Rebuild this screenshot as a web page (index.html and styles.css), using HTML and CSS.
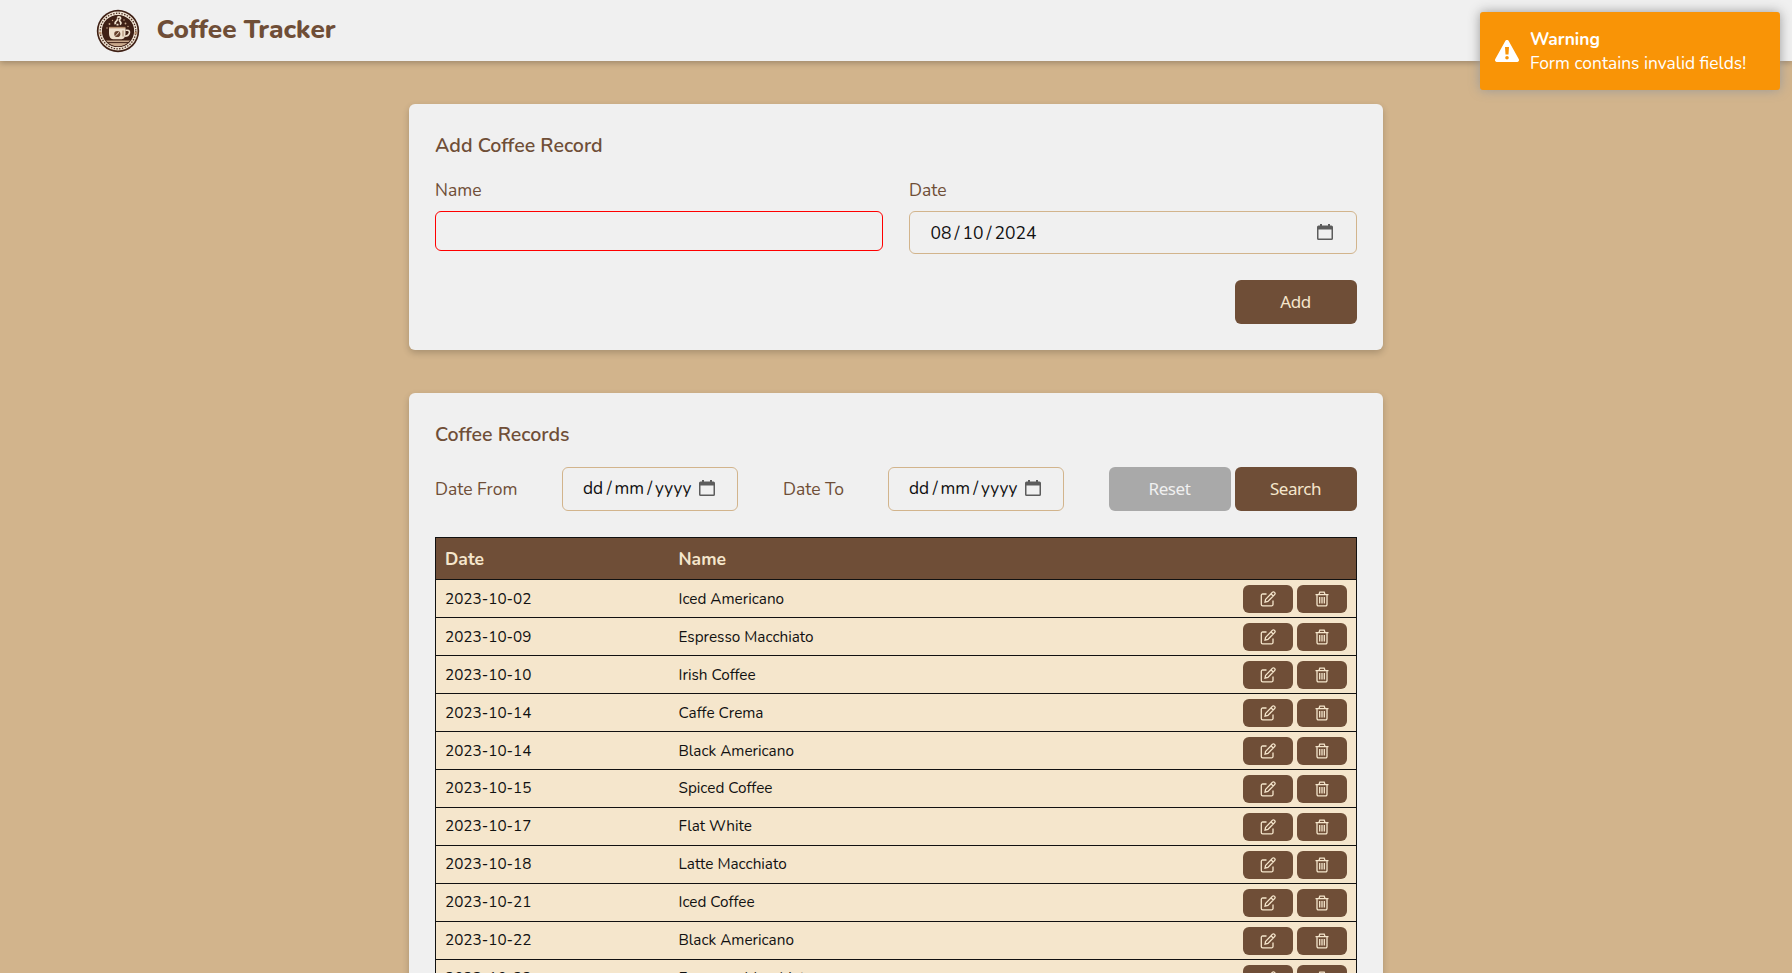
FILE: index.html
```
<!DOCTYPE html>
<html lang="en">
<head>
<meta charset="utf-8">
<title>Coffee Tracker</title>
<link rel="stylesheet" href="styles.css">
</head>
<body>
<svg class="sprite" aria-hidden="true">
  <symbol id="edit" viewBox="0 0 16 16"><path d="M6.500 3H2.700A1.400 1.400 0 0 0 1.300 4.400v9a1.400 1.400 0 0 0 1.400 1.400H11.600a1.400 1.400 0 0 0 1.400-1.400V9.500M5.600 8.400 12.300 1.400a1.550 1.550 0 0 1 2.300 2.200L7.900 10.500l-2.900.7zM11 2.800l2.200 2.200"/></symbol>
  <symbol id="trash" viewBox="0 0 16 16"><path d="M1.500 3.600h13M3 3.800v9.700A1.400 1.400 0 0 0 4.400 14.900h7.200A1.400 1.400 0 0 0 13 13.500V3.800M5 3.400 5.800 1.200h4.400L11 3.400M5.700 6v6.600M8 6v6.600M10.300 6v6.600"/></symbol>
  <symbol id="calendar" viewBox="0 0 16 16"><path fill-rule="evenodd" d="M3 0h2v1.500h6V0h2v1.500h1.400A1.600 1.600 0 0 1 16 3.100v11.300a1.600 1.600 0 0 1-1.600 1.600H1.600A1.600 1.600 0 0 1 0 14.400V3.100A1.600 1.600 0 0 1 1.600 1.500H3zM1.500 5.500v9h13v-9z"/></symbol>
</svg>
<header class="topbar">
  <svg class="logo" viewBox="0 0 44 44">
    <circle cx="22" cy="22" r="21.200" fill="#3f2015"/>
    <circle cx="22" cy="22" r="17.800" fill="none" stroke="#efe3d3" stroke-width="3.400"/>
    <circle cx="22" cy="22" r="17.800" fill="none" stroke="#4a2a1c" stroke-width="1.300" stroke-dasharray="1.400 1.400"/>
    <circle cx="22" cy="22" r="15.400" fill="#3f2015"/>
    <path d="M10 31.500h24a15.400 15.400 0 0 1-24 0z" fill="#c9a98c"/>
    <path d="M11 33.600h22" stroke="#3f2015" stroke-width="1"/>
    <path d="M13 19h16.500v5c0 3.500-1.500 6.200-4 6.200h-8.500c-2.500 0-4-2.700-4-6.200z" fill="#efe0cc"/>
    <path d="M13 18.600h16.500" stroke="#b78e6d" stroke-width="1.500"/>
    <path d="M29.500 21.200h2c3.400 0 2.400 6-2.600 6" fill="none" stroke="#efe0cc" stroke-width="1.600"/>
    <circle cx="21.300" cy="25" r="3.100" fill="#68412d"/>
    <path d="M19.500 26.600c2-.5 1.800-2.800 3.600-3.200" stroke="#efe0cc" fill="none"/>
    <path d="M27 21.500v6" stroke="#a17e65"/>
    <path d="M19.500 15.300c-2-3.200 3.300-3.200 1.800-6M24 15.600c3.200-2.600-2.700-3.400.3-5.600M21.300 8.800c1.500-1.800 4-.6 3 1.400M20.500 15.600h2" fill="none" stroke="#efe0cc" stroke-width="1.700"/>
    <g fill="#c9a98c"><circle cx="13.500" cy="15" r=".9"/><circle cx="16.500" cy="11.500" r=".7"/><circle cx="29.500" cy="14.500" r=".9"/><circle cx="32" cy="17.500" r=".7"/><circle cx="11" cy="19" r=".7"/><circle cx="28" cy="11" r=".7"/></g>
    <g fill="#b78e6d"><circle cx="4.200" cy="24" r="1.500"/><circle cx="39.800" cy="24" r="1.500"/></g>
  </svg>
  <h1 class="brand">Coffee Tracker</h1>
</header>
<main class="page">
  <section class="card">
    <h2 class="card-title">Add Coffee Record</h2>
    <form class="add-form">
      <div class="field"><label class="label">Name</label><div class="input input-invalid"></div></div>
      <div class="field"><label class="label">Date</label>
        <div class="input date-input date-wide"><span class="dd">08</span><span class="sep">/</span><span class="dd">10</span><span class="sep">/</span><span class="yy">2024</span><svg class="cal"><use href="#calendar"/></svg></div></div>
    </form>
    <div class="actions"><button class="btn">Add</button></div>
  </section>
  <section class="card">
    <h2 class="card-title">Coffee Records</h2>
    <div class="filters">
      <label class="label from">Date From</label>
      <div class="input date-input blank"><span class="dd">dd</span><span class="sep">/</span><span class="mm">mm</span><span class="sep">/</span><span class="yy">yyyy</span><svg class="cal"><use href="#calendar"/></svg></div>
      <label class="label to">Date To</label>
      <div class="input date-input blank"><span class="dd">dd</span><span class="sep">/</span><span class="mm">mm</span><span class="sep">/</span><span class="yy">yyyy</span><svg class="cal"><use href="#calendar"/></svg></div>
      <div class="btn-group"><button class="btn btn-reset">Reset</button><button class="btn">Search</button></div>
    </div>
    <table class="records">
      <thead><tr><th class="col-date">Date</th><th>Name</th><th class="col-act"></th></tr></thead>
      <tbody>
      <tr><td>2023-10-02</td><td>Iced Americano</td><td><div class="row-actions"><button class="mini"><svg><use href="#edit"/></svg></button><button class="mini"><svg><use href="#trash"/></svg></button></div></td></tr>
      <tr><td>2023-10-09</td><td>Espresso Macchiato</td><td><div class="row-actions"><button class="mini"><svg><use href="#edit"/></svg></button><button class="mini"><svg><use href="#trash"/></svg></button></div></td></tr>
      <tr><td>2023-10-10</td><td>Irish Coffee</td><td><div class="row-actions"><button class="mini"><svg><use href="#edit"/></svg></button><button class="mini"><svg><use href="#trash"/></svg></button></div></td></tr>
      <tr><td>2023-10-14</td><td>Caffe Crema</td><td><div class="row-actions"><button class="mini"><svg><use href="#edit"/></svg></button><button class="mini"><svg><use href="#trash"/></svg></button></div></td></tr>
      <tr><td>2023-10-14</td><td>Black Americano</td><td><div class="row-actions"><button class="mini"><svg><use href="#edit"/></svg></button><button class="mini"><svg><use href="#trash"/></svg></button></div></td></tr>
      <tr class="snug"><td>2023-10-15</td><td>Spiced Coffee</td><td><div class="row-actions"><button class="mini"><svg><use href="#edit"/></svg></button><button class="mini"><svg><use href="#trash"/></svg></button></div></td></tr>
      <tr class="snug"><td>2023-10-17</td><td>Flat White</td><td><div class="row-actions"><button class="mini"><svg><use href="#edit"/></svg></button><button class="mini"><svg><use href="#trash"/></svg></button></div></td></tr>
      <tr class="snug"><td>2023-10-18</td><td>Latte Macchiato</td><td><div class="row-actions"><button class="mini"><svg><use href="#edit"/></svg></button><button class="mini"><svg><use href="#trash"/></svg></button></div></td></tr>
      <tr class="snug"><td>2023-10-21</td><td>Iced Coffee</td><td><div class="row-actions"><button class="mini"><svg><use href="#edit"/></svg></button><button class="mini"><svg><use href="#trash"/></svg></button></div></td></tr>
      <tr class="snug"><td>2023-10-22</td><td>Black Americano</td><td><div class="row-actions"><button class="mini"><svg><use href="#edit"/></svg></button><button class="mini"><svg><use href="#trash"/></svg></button></div></td></tr>
      <tr class="snug"><td>2023-10-22</td><td>Espresso Macchiato</td><td><div class="row-actions"><button class="mini"><svg><use href="#edit"/></svg></button><button class="mini"><svg><use href="#trash"/></svg></button></div></td></tr>
      </tbody>
    </table>
  </section>
</main>
<aside class="toast">
  <svg class="warn" viewBox="0 0 24 22"><path fill="#fff" fill-rule="evenodd" d="M10.300.900a2 2 0 0 1 3.400 0l10 18.200a1.900 1.900 0 0 1-1.700 2.900H2a1.900 1.900 0 0 1-1.700-2.900zM10 7l.5 7.500h3L14 7zm2 9a1.800 1.800 0 1 0 0 3.600 1.800 1.800 0 0 0 0-3.600z"/></svg>
  <div><div class="toast-title">Warning</div><div class="toast-text">Form contains invalid fields!</div></div>
</aside>
</body>
</html>
```
FILE: styles.css
```
* { box-sizing: border-box; }
body { margin: 0; height: 973px; overflow: hidden; background: #d2b48c; font-family: Nunito, Lato, sans-serif; font-size: 17.5px; color: #111; }
.sprite { display: none; }
.topbar { height: 61px; padding-left: 95.5px; display: flex; align-items: center; background: #f0f0f0; box-shadow: 0 2px 6px rgba(0,0,0,.25); }
.logo { width: 44px; height: 44px; flex: none; }
.brand { margin: 0 0 2px 17px; font-size: 26.2px; font-weight: 800; line-height: 36px; color: #6f4e37; white-space: nowrap; }
.page { width: 974px; height: 869px; margin: 43px auto 0; display: flex; flex-direction: column; gap: 43px; }
.card { flex: none; background: #f0f0f0; border-radius: 6px; padding: 26px; box-shadow: 0 3px 7px rgba(0,0,0,.2); }
.card-title { margin: 0; height: 31px; line-height: 31px; font-size: 19.6px; font-weight: 600; color: #6f4e37; }
.add-form { display: grid; grid-template-columns: 1fr 1fr; gap: 26px; margin-top: 17px; }
.label { display: block; line-height: 24px; color: #6f4e37; white-space: nowrap; }
.field .label { margin-bottom: 9px; }
.input { border: 1px solid #d2b48c; border-radius: 6px; }
.input-invalid { height: 40px; border-color: red; }
.date-input { display: flex; align-items: center; padding-left: 20.5px; line-height: 24px; }
.date-wide { height: 43px; padding-right: 23px; }
.cal { width: 16px; height: 16px; fill: #5c5c5c; margin-left: auto; position: relative; top: -1px; }
.dd { width: 21px; }
.sep { width: 11px; text-align: center; }
.mm { width: 30px; }
.blank { width: 176px; height: 44px; padding-left: 20px; font-size: 17.3px; }
.blank .sep { width: 10.5px; }
.blank .yy { width: 37px; }
.blank .cal { margin-left: 6.5px; }
.actions { display: flex; justify-content: flex-end; margin-top: 26px; }
.btn { width: 122px; height: 44px; padding: 0 1px 1px 0; border: 0; border-radius: 6px; background: #6f4e37; color: #f5e6cc; font: 17px "Noto Sans", sans-serif; letter-spacing: -.45px; }
.btn-reset { background: #a9a9a9; color: #f0f0f0; }
.btn-group { display: flex; gap: 4px; }
.filters { display: flex; justify-content: space-between; align-items: center; height: 44px; margin-top: 17px; }
.from { width: 82px; }
.to { width: 60px; }
.records { width: 922px; margin-top: 26px; border-collapse: collapse; table-layout: fixed; background: #f5e6cc; border: 1px solid #111; }
.records tr { height: 38px; border-bottom: 1px solid #111; }
.records thead tr { height: 42px; background: #6f4e37; color: #f5e6cc; }
.records th { text-align: left; font-size: 17.5px; font-weight: 700; padding: 0 9px; }
.records td { font-size: 15.3px; padding: 0 9px; line-height: 20px; }
.snug td:not(:last-child) { padding-bottom: 2px; }
.col-date { width: 234px; }
.col-act { width: 140px; }
.row-actions { display: flex; justify-content: flex-end; gap: 4px; }
.mini { width: 50px; height: 28px; padding: 0; border: 0; border-radius: 6px; background: #6f4e37; display: flex; align-items: center; justify-content: center; }
.mini svg { width: 16px; height: 16px; fill: none; stroke: #f5e6cc; stroke-width: 1.3; }
.toast { position: absolute; left: 1480px; top: 12px; width: 300px; height: 78px; padding: 15px; display: flex; align-items: center; gap: 11px; background: #f99406; border-radius: 3px; box-shadow: 0 0 12px #999; color: #fff; font-size: 17.4px; line-height: 24px; white-space: nowrap; }
.warn { width: 24px; height: 22px; flex: none; }
.toast-title { font-weight: 700; }
```
